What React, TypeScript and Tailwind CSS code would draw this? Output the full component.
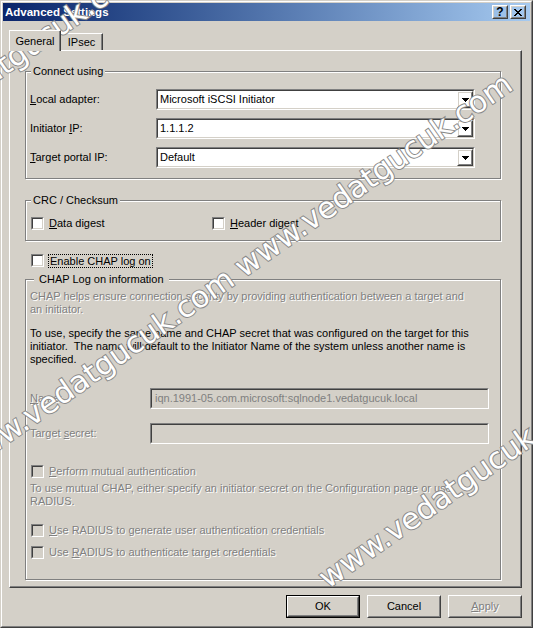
import React from "react";

type BoxProps = {
  className?: string;
  innerClassName?: string;
  children?: React.ReactNode;
};

function Raised({ className = "", innerClassName = "", children }: BoxProps) {
  return (
    <div
      className={`border border-t-white border-l-white border-r-[#404040] border-b-[#404040] ${className}`}
    >
      <div
        className={`h-full w-full border border-t-[#d4d0c8] border-l-[#d4d0c8] border-r-[#808080] border-b-[#808080] flex items-center justify-center ${innerClassName}`}
      >
        {children}
      </div>
    </div>
  );
}

function Sunken({ className = "", innerClassName = "", children }: BoxProps) {
  return (
    <div
      className={`border border-t-[#808080] border-l-[#808080] border-r-white border-b-white ${className}`}
    >
      <div
        className={`h-full w-full border border-t-[#404040] border-l-[#404040] border-r-[#d4d0c8] border-b-[#d4d0c8] ${innerClassName}`}
      >
        {children}
      </div>
    </div>
  );
}

function Arrow() {
  return (
    <svg width="7" height="4" viewBox="0 0 7 4" shapeRendering="crispEdges">
      <path d="M0 0h7v1h-1v1h-1v1h-1v1h-1v-1h-1v-1h-1v-1h-1z" fill="#000" />
    </svg>
  );
}

function Combo({ value }: { value: string }) {
  return (
    <Sunken className="w-[319px] h-[21px]" innerClassName="bg-white flex items-center">
      <span className="flex-1 pl-[2px]">{value}</span>
      <Raised className="w-[16px] h-[17px]">
        <Arrow />
      </Raised>
    </Sunken>
  );
}

function Check({ disabled = false }: { disabled?: boolean }) {
  return (
    <Sunken
      className="w-[13px] h-[13px] shrink-0"
      innerClassName={disabled ? "bg-[#d4d0c8]" : "bg-white"}
    />
  );
}

function Group({
  title,
  titleClass,
  className = "",
  children,
}: {
  title: string;
  titleClass: string;
  className?: string;
  children?: React.ReactNode;
}) {
  return (
    <div
      className={`relative w-[476px] border border-[#808080] shadow-[1px_1px_0_#fff,inset_1px_1px_0_#fff] ${className}`}
    >
      <span className={`absolute -top-[7px] bg-[#d4d0c8] leading-[13px] ${titleClass}`}>
        {title}
      </span>
      {children}
    </div>
  );
}

const dim = "text-[#808080] [text-shadow:1px_1px_0_#fff]";

// diagonal site watermark laid over the screenshot
function Mark({ className }: { className: string }) {
  return (
    <span
      className={`pointer-events-none absolute origin-left -rotate-[35deg] whitespace-nowrap font-['DejaVu_Sans',sans-serif] text-[30px] leading-[34px] text-white [-webkit-text-stroke:2px_#8a8a8a] [paint-order:stroke_fill] ${className}`}
    >
      www.vedatgucuk.com
    </span>
  );
}

export default function App() {
  return (
    <div className="relative w-[533px] h-[628px] overflow-hidden bg-[#d4d0c8] font-['Liberation_Sans',Arial,sans-serif] text-[11px] leading-[13px] text-black select-none">
      <div className="h-full border border-t-[#d4d0c8] border-l-[#d4d0c8] border-r-[#404040] border-b-[#404040]">
        <div className="h-full border border-t-white border-l-white border-r-[#808080] border-b-[#808080] p-px flex flex-col">
          {/* caption */}
          <div className="h-[18px] flex items-center bg-linear-to-r from-[#0a246a] to-[#a6caf0] pl-[2px] pr-[4px]">
            <span className="flex-1 text-white font-bold text-[11.5px]">Advanced Settings</span>
            <Raised className="w-[16px] h-[14px]">
              <span className="font-bold text-[12px] leading-none">?</span>
            </Raised>
            <Raised className="w-[16px] h-[14px] ml-[2px]">
              <svg width="8" height="7" viewBox="0 0 8 7" shapeRendering="crispEdges">
                <path
                  d="M0 0h2v1h-2zM6 0h2v1h-2zM1 1h2v1h-2zM5 1h2v1h-2zM2 2h4v1h-4zM3 3h2v1h-2zM2 4h4v1h-4zM1 5h2v1h-2zM5 5h2v1h-2zM0 6h2v1h-2zM6 6h2v1h-2z"
                  fill="#000"
                />
              </svg>
            </Raised>
          </div>

          {/* tabs */}
          <div className="h-[29px] flex items-end pl-[6px]">
            <div className="relative z-10 -mb-px h-[21px] w-[52px] bg-[#d4d0c8] border-t border-l border-r border-t-white border-l-white border-r-[#404040] shadow-[inset_-1px_0_0_#808080] flex items-center justify-center">
              General
            </div>
            <div className="h-[17px] w-[42px] border-t border-r border-t-white border-r-[#404040] shadow-[inset_-1px_0_0_#808080] flex items-center justify-center pt-px">
              IPsec
            </div>
          </div>

          {/* tab page */}
          <div className="ml-[6px] w-[513px] h-[538px] border border-t-white border-l-white border-r-[#404040] border-b-[#404040]">
            <div className="h-full border-r border-b border-r-[#808080] border-b-[#808080] pl-[15px] pt-[20px] flex flex-col items-start">
              <Group title="Connect using" titleClass="left-[5px] px-[2px]" className="h-[108px] pt-[17px] pl-[4px] flex flex-col gap-[8px]">
                <div className="flex items-center h-[21px]">
                  <span className="w-[126px]">
                    <span className="underline">L</span>ocal adapter:
                  </span>
                  <Combo value="Microsoft iSCSI Initiator" />
                </div>
                <div className="flex items-center h-[21px]">
                  <span className="w-[126px]">
                    Initiator <span className="underline">I</span>P:
                  </span>
                  <Combo value="1.1.1.2" />
                </div>
                <div className="flex items-center h-[21px]">
                  <span className="w-[126px]">
                    <span className="underline">T</span>arget portal IP:
                  </span>
                  <Combo value="Default" />
                </div>
              </Group>

              <Group title="CRC / Checksum" titleClass="left-[5px] px-[2px]" className="mt-[21px] h-[41px] pt-[16px] pl-[5px] flex">
                <div className="w-[181px] flex items-center h-[13px]">
                  <Check />
                  <span className="ml-[5px]">
                    <span className="underline">D</span>ata digest
                  </span>
                </div>
                <div className="flex items-center h-[13px]">
                  <Check />
                  <span className="ml-[5px]">
                    <span className="underline">H</span>eader digest
                  </span>
                </div>
              </Group>

              <div className="mt-[13px] ml-[6px] flex items-center h-[13px]">
                <Check />
                <span className="ml-[4px] px-px border border-dotted border-black leading-[12px]">
                  Enable CHAP log on
                </span>
              </div>

              <Group title="CHAP Log on information" titleClass="left-[8px] px-[5px]" className="mt-[12px] h-[301px] pt-[10px] pl-[4px] flex flex-col items-start">
                <p className={dim}>
                  CHAP helps ensure connection security by providing authentication between a target and
                  <br />
                  an initiator.
                </p>
                <p className="mt-[11px]">
                  To use, specify the same name and CHAP secret that was configured on the target for this
                  <br />
                  initiator.{"\u00a0"} The name will default to the Initiator Name of the system unless another name is
                  <br />
                  specified.
                </p>
                <div className="mt-[22px] flex items-center h-[21px]">
                  <span className={`w-[120px] ${dim}`}>
                    <span className="underline">N</span>ame:
                  </span>
                  <Sunken className="w-[339px] h-[21px]" innerClassName="flex items-center pl-[3px] text-[#808080]">
                    iqn.1991-05.com.microsoft:sqlnode1.vedatgucuk.local
                  </Sunken>
                </div>
                <div className="mt-[14px] flex items-center h-[21px]">
                  <span className={`w-[120px] ${dim}`}>
                    Target <span className="underline">s</span>ecret:
                  </span>
                  <Sunken className="w-[339px] h-[21px]" />
                </div>
                <div className="mt-[21px] ml-px flex items-center h-[13px]">
                  <Check disabled />
                  <span className={`ml-[5px] ${dim}`}>
                    <span className="underline">P</span>erform mutual authentication
                  </span>
                </div>
                <p className={`mt-[4px] ${dim}`}>
                  To use mutual CHAP, either specify an initiator secret on the Configuration page or use
                  <br />
                  RADIUS.
                </p>
                <div className="mt-[16px] ml-px flex items-center h-[13px]">
                  <Check disabled />
                  <span className={`ml-[5px] ${dim}`}>
                    <span className="underline">U</span>se RADIUS to generate user authentication credentials
                  </span>
                </div>
                <div className="mt-[9px] ml-px flex items-center h-[13px]">
                  <Check disabled />
                  <span className={`ml-[5px] ${dim}`}>
                    Use <span className="underline">R</span>ADIUS to authenticate target credentials
                  </span>
                </div>
              </Group>
            </div>
          </div>

          {/* buttons */}
          <div className="mt-[7px] ml-[6px] w-[513px] flex justify-end gap-[7px]">
            <div className="w-[74px] h-[23px] border border-black">
              <Raised className="h-full w-full">OK</Raised>
            </div>
            <Raised className="w-[74px] h-[23px]">Cancel</Raised>
            <Raised className="w-[74px] h-[23px]">
              <span className={dim}>
                <span className="underline">A</span>pply
              </span>
            </Raised>
          </div>
        </div>
      </div>

      <Mark className="left-[-127px] top-[139px]" />
      <Mark className="left-[-40px] top-[448px]" />
      <Mark className="left-[238px] top-[253px]" />
      <Mark className="left-[322px] top-[564px]" />
    </div>
  );
}
